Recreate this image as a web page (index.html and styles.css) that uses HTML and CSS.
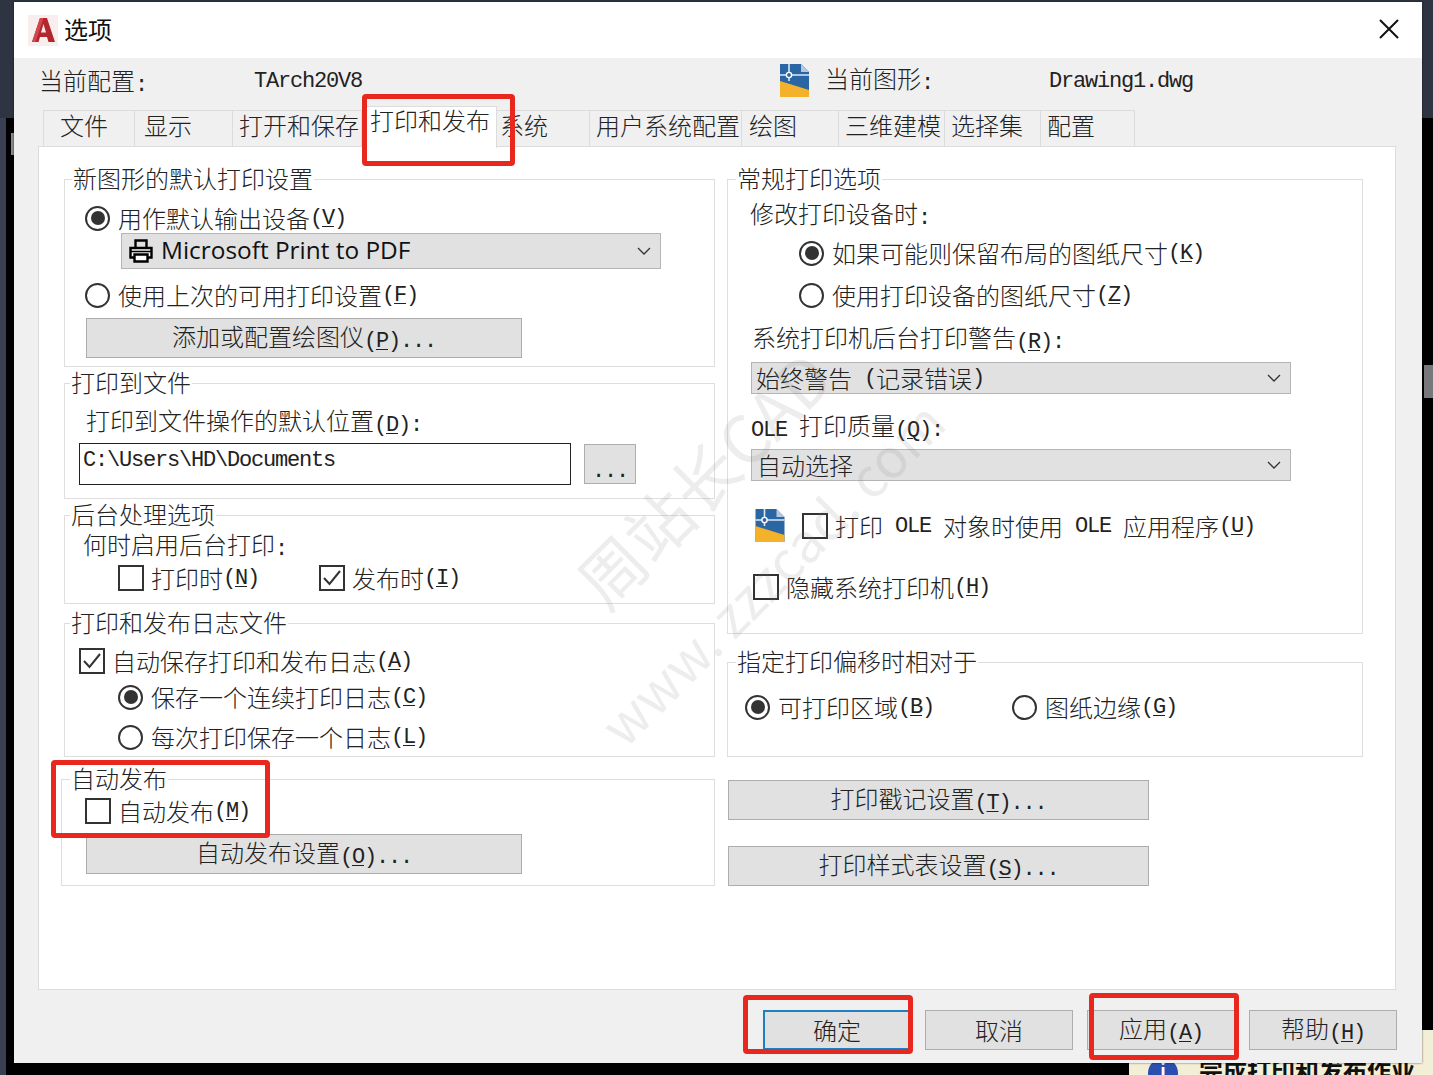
FILE: index.html
```html
<!DOCTYPE html>
<html lang="zh-CN">
<head>
  <meta charset="UTF-8">
  <title>选项</title>
  <link rel="stylesheet" href="styles.css">
</head>
<body>
  <svg class="defs" width="0" height="0">
    <symbol id="dwg" viewBox="0 0 29 33">
      <path d="M0 0H21L29 8V33H0Z" fill="#2a66a3"/>
      <path d="M21 0L29 8H21Z" fill="#b4c8e0"/>
      <path d="M0 17L29 26V33H0Z" fill="#f3b229"/>
      <path d="M0 11H29M9 0V17" stroke="#dbe7f3" stroke-width="1.6" fill="none"/>
      <circle cx="9" cy="11" r="2.6" fill="#2a66a3" stroke="#fff" stroke-width="1.4"/>
    </symbol>
    <symbol id="chev" viewBox="0 0 14 8">
      <path d="M1 1L7 7L13 1" fill="none" stroke="#333" stroke-width="1.3"/>
    </symbol>
    <symbol id="tick" viewBox="0 0 26 26">
      <path d="M5 13L10.5 19L21 6" fill="none" stroke="#333" stroke-width="2"/>
    </symbol>
  </svg>

  <!-- what shows around the dialog -->
  <div class="bg-top"></div>
  <div class="bg-left"></div>
  <div class="bg-handle"></div>
  <div class="bg-right"></div>
  <div class="bg-note">
    <span class="note-icon">i</span>
    <span class="note-text">完成打印和发布作业</span>
  </div>

  <div class="dialog">
    <div class="titlebar">
      <span class="logo">
        <svg width="23" height="24" viewBox="0 0 23 24">
          <path d="M8 0H15L23 24H16.5L15 19H8L6.5 24H0Z" fill="#b3262d"/>
          <path d="M11.5 6L9 14.5H14Z" fill="#f7e9e9"/>
          <path d="M8 0H11.5L3.5 24H0Z" fill="#d2474c"/>
        </svg>
      </span>
      <span class="title">选项</span>
      <svg class="close" width="20" height="20" viewBox="0 0 20 20">
        <path d="M1 1L19 19M19 1L1 19" stroke="#111" stroke-width="2"/>
      </svg>
    </div>

    <div class="profile">
      <span class="profile-label">当前配置<span class="m">:</span></span>
      <span class="m profile-name">TArch20V8</span>
      <svg class="dwg-head" width="29" height="33"><use href="#dwg"/></svg>
      <span class="drawing-label">当前图形<span class="m">:</span></span>
      <span class="m drawing-name">Drawing1.dwg</span>
    </div>

    <div class="tabs">
      <div class="tab tab-files">文件</div>
      <div class="tab tab-display">显示</div>
      <div class="tab tab-open">打开和保存</div>
      <div class="tab tab-plot active">打印和发布</div>
      <div class="tab tab-system">系统</div>
      <div class="tab tab-user">用户系统配置</div>
      <div class="tab tab-draft">绘图</div>
      <div class="tab tab-3d">三维建模</div>
      <div class="tab tab-select">选择集</div>
      <div class="tab tab-profiles">配置</div>
    </div>

    <div class="page">
      <div class="col-left">
        <fieldset class="group g-device">
          <legend>新图形的默认打印设置</legend>
          <div class="opt first"><span class="radio on"></span>用作默认输出设备<span class="m">(<u>V</u>)</span></div>
          <div class="combo combo-device">
            <svg class="printer" width="24" height="24" viewBox="0 0 24 24">
              <path d="M6.5 9V1.5H17.5V9" fill="none" stroke="#000" stroke-width="2.4"/>
              <path d="M5.5 18.5H1.5V9H22.5V18.5H18.5" fill="#fff" stroke="#000" stroke-width="2.4"/>
              <path d="M5.5 15.5H18.5V22.5H5.5Z" fill="#fff" stroke="#000" stroke-width="2.4"/>
              <path d="M2 12.5H22" stroke="#000" stroke-width="1.6"/>
            </svg>
            <span class="combo-sans">Microsoft Print to PDF</span>
            <svg class="chev" width="14" height="8"><use href="#chev"/></svg>
          </div>
          <div class="opt second"><span class="radio"></span>使用上次的可用打印设置<span class="m">(<u>F</u>)</span></div>
          <button class="btn btn-wide btn-plotter">添加或配置绘图仪<span class="m">(<u>P</u>)...</span></button>
        </fieldset>

        <fieldset class="group g-file">
          <legend>打印到文件</legend>
          <div class="label file-label">打印到文件操作的默认位置<span class="m">(<u>D</u>):</span></div>
          <div class="file-row">
            <input class="path m" type="text" value="C:\Users\HD\Documents" readonly>
            <button class="btn btn-dots"><span class="m">...</span></button>
          </div>
        </fieldset>

        <fieldset class="group g-back">
          <legend>后台处理选项</legend>
          <div class="label back-label">何时启用后台打印<span class="m">:</span></div>
          <div class="back-row">
            <div class="opt back-a"><span class="check"></span>打印时<span class="m">(<u>N</u>)</span></div>
            <div class="opt back-b">
              <span class="check"><svg width="26" height="26"><use href="#tick"/></svg></span>发布时<span class="m">(<u>I</u>)</span>
            </div>
          </div>
        </fieldset>

        <fieldset class="group g-log">
          <legend>打印和发布日志文件</legend>
          <div class="opt log-auto">
            <span class="check"><svg width="26" height="26"><use href="#tick"/></svg></span>自动保存打印和发布日志<span class="m">(<u>A</u>)</span>
          </div>
          <div class="opt log-one"><span class="radio on"></span>保存一个连续打印日志<span class="m">(<u>C</u>)</span></div>
          <div class="opt log-each"><span class="radio"></span>每次打印保存一个日志<span class="m">(<u>L</u>)</span></div>
        </fieldset>

        <fieldset class="group g-auto">
          <legend>自动发布</legend>
          <div class="opt auto-check"><span class="check"></span>自动发布<span class="m">(<u>M</u>)</span></div>
          <button class="btn btn-wide btn-auto">自动发布设置<span class="m">(<u>O</u>)...</span></button>
        </fieldset>
      </div>

      <div class="col-right">
        <fieldset class="group g-general">
          <legend>常规打印选项</legend>
          <div class="label gen-when">修改打印设备时<span class="m">:</span></div>
          <div class="opt gen-keep"><span class="radio on"></span>如果可能则保留布局的图纸尺寸<span class="m">(<u>K</u>)</span></div>
          <div class="opt gen-use"><span class="radio"></span>使用打印设备的图纸尺寸<span class="m">(<u>Z</u>)</span></div>
          <div class="label gen-spool">系统打印机后台打印警告<span class="m">(<u>R</u>):</span></div>
          <div class="combo combo-small combo-spool">始终警告<span class="m"> (</span>记录错误<span class="m">)</span>
            <svg class="chev" width="14" height="8"><use href="#chev"/></svg>
          </div>
          <div class="label gen-ole"><span class="m">OLE </span>打印质量<span class="m">(<u>Q</u>):</span></div>
          <div class="combo combo-small combo-ole">自动选择
            <svg class="chev" width="14" height="8"><use href="#chev"/></svg>
          </div>
          <div class="opt gen-app">
            <svg class="dwg-row" width="30" height="33"><use href="#dwg"/></svg>
            <span class="check"></span>打印<span class="m"> OLE </span>对象时使用<span class="m"> OLE </span>应用程序<span class="m">(<u>U</u>)</span>
          </div>
          <div class="opt gen-hide"><span class="check"></span>隐藏系统打印机<span class="m">(<u>H</u>)</span></div>
        </fieldset>

        <fieldset class="group g-offset">
          <legend>指定打印偏移时相对于</legend>
          <div class="offset-row">
            <div class="opt off-a"><span class="radio on"></span>可打印区域<span class="m">(<u>B</u>)</span></div>
            <div class="opt off-b"><span class="radio"></span>图纸边缘<span class="m">(<u>G</u>)</span></div>
          </div>
        </fieldset>

        <button class="btn btn-side btn-stamp">打印戳记设置<span class="m">(<u>T</u>)...</span></button>
        <button class="btn btn-side btn-style">打印样式表设置<span class="m">(<u>S</u>)...</span></button>
      </div>
    </div>

    <div class="footer">
      <button class="btn btn-foot default">确定</button>
      <button class="btn btn-foot">取消</button>
      <button class="btn btn-foot">应用<span class="m">(<u>A</u>)</span></button>
      <button class="btn btn-foot">帮助<span class="m">(<u>H</u>)</span></button>
    </div>

    <!-- site watermark -->
    <div class="mark mark-cn">周站长CAD</div>
    <div class="mark mark-url">www. zzzcad. com</div>

    <!-- red annotations -->
    <div class="note note-tab"></div>
    <div class="note note-auto"></div>
    <div class="note note-ok"></div>
    <div class="note note-apply"></div>
  </div>
</body>
</html>
```

FILE: styles.css
```css
/* Global */
* { box-sizing: border-box; }
html, body { margin: 0; padding: 0; height: 100%; overflow: hidden; }
body {
  position: relative;
  background: #000;
  color: #222;
  font-family: "Noto Sans CJK SC", sans-serif;
  font-weight: 300;
  font-size: 24px;
  line-height: 30px;
}
.defs { position: absolute; }

/* SimSun style half width latin, 12px per character */
.m {
  position: relative;
  top: 1px;
  font-family: "Liberation Mono", monospace;
  font-size: 22px;
  letter-spacing: -1.2px;
  font-weight: 400;
  white-space: pre;
}
u { text-decoration-thickness: 1px; text-underline-offset: 2px; }

/* Desktop behind the dialog */
.bg-top { position: absolute; left: 0; top: 0; width: 1433px; height: 118px; background: #2f3442; }
.bg-left { position: absolute; left: 0; top: 118px; width: 6px; height: 957px; background: #3a4054; }
.bg-handle { position: absolute; left: 11px; top: 133px; width: 3px; height: 22px; background: #8a8a8a; }
.bg-right { position: absolute; left: 1424px; top: 365px; width: 9px; height: 33px; background: #77777c; }
.bg-note {
  position: absolute;
  left: 1129px;
  top: 1030px;
  width: 304px;
  height: 45px;
  background: #f3eed6;
  color: #111;
}
.note-icon {
  position: absolute;
  left: 19px;
  top: 28px;
  width: 30px;
  height: 30px;
  border-radius: 50%;
  background: #2a4fb0;
  color: #fff;
  font-size: 18px;
  font-weight: 700;
  text-align: center;
  line-height: 22px;
}
.note-text {
  position: absolute;
  left: 70px;
  top: 25px;
  font-size: 24px;
  font-weight: 700;
  white-space: nowrap;
}

/* Dialog window */
.dialog {
  position: absolute;
  left: 14px;
  top: 2px;
  width: 1408px;
  height: 1061px;
  background: #f0f0f0;
  box-shadow: 0 0 2px rgba(0,0,0,0.6);
}
.titlebar {
  display: flex;
  align-items: center;
  height: 56px;
  background: #fff;
}
.logo {
  display: flex;
  align-items: center;
  justify-content: center;
  width: 30px;
  height: 31px;
  margin-left: 14px;
  background: #f9eeee;
}
.title { margin: -2px 0 0 6px; font-size: 24px; font-weight: 400; color: #111; }
.close { margin: -2px 23px 0 auto; }

/* Profile line */
.profile { display: flex; align-items: center; height: 44px; padding-left: 25px; }
.profile-label { width: 215px; position: relative; top: 2px; }
.profile-name { width: 526px; top: 2px; }
.drawing-name { top: 2px; }
.dwg-head { margin-right: 16px; }
.drawing-label { width: 224px; }

/* Tabs */
.tabs { display: flex; height: 36px; margin-top: 8px; padding-left: 29px; }
.tab {
  height: 36px;
  border: 1px solid #dcdcdc;
  border-bottom: none;
  border-left: none;
  background: #f0f0f0;
  white-space: nowrap;
  line-height: 28px;
}
.tab-files { width: 92px; padding-left: 16px; border-left: 1px solid #dcdcdc; }
.tab-display { width: 98px; padding-left: 9px; }
.tab-open { width: 129px; padding-left: 6px; }
.tab-plot { width: 135px; padding-left: 8px; }
.tab-system { width: 93px; padding-left: 3px; }
.tab-user { width: 152px; padding-left: 6px; }
.tab-draft { width: 97px; padding-left: 7px; }
.tab-3d { width: 106px; padding-left: 6px; }
.tab-select { width: 96px; padding-left: 6px; }
.tab-profiles { width: 94px; padding-left: 6px; }
.tab.active {
  position: relative;
  z-index: 1;
  height: 42px;
  margin-top: -4px;
  background: #fff;
  line-height: 26px;
}

/* Page */
.page {
  display: flex;
  gap: 12px;
  width: 1358px;
  height: 844px;
  margin-left: 24px;
  padding: 20px 0 0 22px;
  background: #fff;
  border: 1px solid #dcdcdc;
}
.col-left { width: 654px; }
.col-right { width: 636px; }

/* Groups */
.group {
  display: block;
  min-width: 0;
  margin: 0;
  padding: 0;
  border: 1px solid #dedede;
}
.group legend {
  height: 24px;
  padding: 0 1px;
  margin-left: 8px;
  line-height: 22px;
  font-size: 24px;
}
.g-device { height: 200px; margin-left: 3px; padding-left: 20px; }
.g-device legend { margin-left: -13px; }
.g-file { height: 128px; margin: 4px 0 0 3px; }
.g-file legend, .g-back legend, .g-log legend { margin-left: 5px; }
.g-back { height: 101px; margin: 4px 0 0 3px; }
.g-log { height: 146px; margin: 7px 0 0 3px; }
.g-auto { height: 119px; margin-top: 10px; }
.g-general { height: 467px; }
.g-offset { height: 107px; margin-top: 16px; }

/* Form controls */
.opt { display: flex; align-items: center; height: 30px; white-space: nowrap; }
.label { height: 30px; line-height: 30px; white-space: nowrap; }
.radio {
  position: relative;
  flex: none;
  width: 25px;
  height: 25px;
  margin-right: 8px;
  border: 2px solid #333;
  border-radius: 50%;
  background: #fff;
}
.radio.on::after {
  content: "";
  position: absolute;
  left: 3.5px;
  top: 3.5px;
  width: 14px;
  height: 14px;
  border-radius: 50%;
  background: #333;
}
.check {
  flex: none;
  display: block;
  width: 26px;
  height: 26px;
  margin-right: 7px;
  border: 2px solid #333;
  background: #fff;
}
.check svg { display: block; margin: -2px; }

.combo {
  position: relative;
  display: flex;
  align-items: center;
  width: 540px;
  background: #e1e1e1;
  border: 1px solid #b5b5b5;
  white-space: nowrap;
}
.combo .chev { position: absolute; right: 9px; top: 50%; margin-top: -4px; }
.combo-device { height: 36px; padding-left: 7px; }
.combo-small { height: 32px; padding-left: 4px; }
.printer { margin-right: 8px; }
.combo-sans {
  font-family: "Open Sans", sans-serif;
  font-size: 24.4px;
  font-weight: 400;
  color: #111;
  position: relative;
  top: -1px;
}

.btn {
  display: block;
  height: 40px;
  padding: 0;
  border: 1px solid #adadad;
  background: #e1e1e1;
  color: #222;
  font: inherit;
  white-space: nowrap;
}
.btn-wide { width: 436px; }
.btn-side { width: 421px; margin-left: 1px; }
.btn-foot { width: 148px; }

/* Group contents */
.opt.first { margin-top: 12px; }
.combo-device { margin: 0 0 0 36px; }
.opt.second { margin-top: 11px; }
.btn-plotter { margin: 8px 0 0 1px; }

.file-label { margin: 10px 0 0 21px; }
.file-row { display: flex; margin: 8px 0 0 14px; }
.path {
  top: 0;
  width: 492px;
  height: 42px;
  padding: 0 3px 8px;
  border: 1px solid #222;
  background: #fff;
  color: #222;
  outline: none;
}
.btn-dots { width: 52px; margin: 1px 0 0 13px; padding-top: 6px; }

.back-label { margin: 2px 0 0 18px; }
.back-row { display: flex; margin-top: 4px; padding-left: 53px; }
.back-a { width: 201px; }

.log-auto { margin: 11px 0 0 14px; }
.log-one { margin: 6px 0 0 53px; }
.log-each { margin: 10px 0 0 53px; }

.auto-check { margin: 5px 0 0 23px; }
.btn-auto { margin: 8px 0 0 24px; }

.gen-when { margin: 7px 0 0 22px; }
.gen-keep { margin: 10px 0 0 71px; }
.gen-use { margin: 12px 0 0 71px; }
.gen-spool { margin: 12px 0 0 24px; }
.combo-spool { margin: 10px 0 0 23px; }
.gen-ole { margin: 16px 0 0 23px; }
.combo-ole { margin: 9px 0 0 23px; padding-left: 5px; }
.gen-app { height: 33px; margin: 28px 0 0 27px; }
.dwg-row { margin-right: 17px; }
.gen-hide { margin: 30px 0 0 25px; }

.offset-row { display: flex; margin-top: 18px; padding-left: 17px; }
.off-a { width: 267px; }

.btn-stamp { margin-top: 23px; }
.btn-style { margin-top: 26px; }

/* Footer buttons */
.footer {
  display: flex;
  justify-content: flex-end;
  gap: 14px;
  margin-top: 20px;
  padding-right: 25px;
}
.btn-foot.default {
  border: 2px solid #1e7fc2;
}

/* Watermark */
.mark {
  position: absolute;
  transform: rotate(-45deg);
  transform-origin: left bottom;
  color: rgba(130,130,130,0.14);
  white-space: nowrap;
  pointer-events: none;
  font-weight: 400;
}
.mark-cn { left: 600px; top: 540px; font-size: 66px; line-height: 78px; }
.mark-url { left: 616px; top: 693px; font-size: 54px; line-height: 60px; }

/* Red boxes drawn on the screenshot */
.note {
  position: absolute;
  z-index: 2;
  border: 5px solid #e8281f;
  border-radius: 4px;
  pointer-events: none;
}
.note-tab { left: 348px; top: 92px; width: 153px; height: 72px; }
.note-auto { left: 37px; top: 758px; width: 219px; height: 78px; }
.note-ok { left: 729px; top: 993px; width: 170px; height: 59px; }
.note-apply { left: 1075px; top: 991px; width: 150px; height: 67px; }
```
